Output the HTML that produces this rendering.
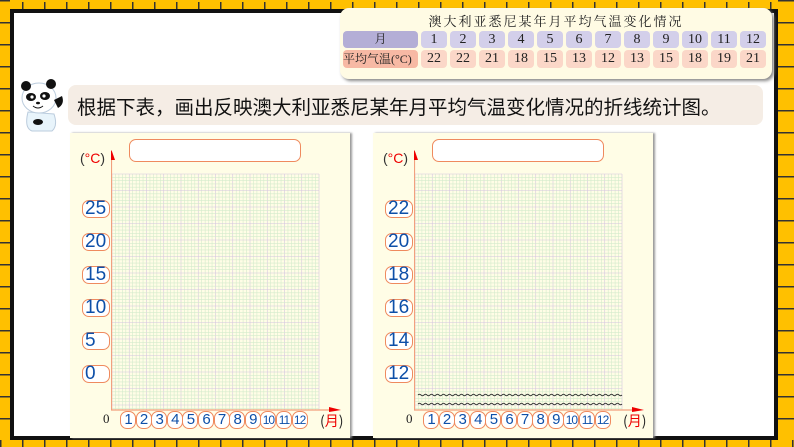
<!DOCTYPE html>
<html><head><meta charset="utf-8"><style>
*{margin:0;padding:0;box-sizing:border-box}
body{width:794px;height:447px;overflow:hidden;background:#fff;position:relative;font-family:"Liberation Sans","Noto Sans CJK SC",sans-serif}
.abs{position:absolute}
</style></head><body>
<svg class="abs" style="left:0;top:0" width="794" height="447">
<defs>
<pattern id="tk" width="22" height="9" patternUnits="userSpaceOnUse"><rect width="22" height="9" fill="#ffc000"/><rect x="0" y="2" width="1.5" height="7" fill="#333"/></pattern>
<pattern id="tkv" width="10" height="22" patternUnits="userSpaceOnUse"><rect width="10" height="22" fill="#ffc000"/><rect x="0" y="0" width="10" height="1.5" fill="#333"/></pattern>
<pattern id="tkr" width="16" height="22" patternUnits="userSpaceOnUse"><rect width="16" height="22" fill="#ffc000"/><rect x="0" y="0" width="16" height="1.5" fill="#333"/></pattern>
<pattern id="tkb" width="22" height="7" patternUnits="userSpaceOnUse"><rect width="22" height="7" fill="#ffc000"/><rect x="0" y="0" width="1.5" height="7" fill="#333"/></pattern>
</defs>
<rect x="0" y="0" width="794" height="9" fill="url(#tk)"/>
<rect x="0" y="0" width="10" height="447" fill="url(#tkv)"/>
<rect x="778" y="0" width="16" height="447" fill="url(#tkr)"/>
<rect x="0" y="440" width="794" height="7" fill="url(#tkb)"/>
<rect x="10" y="9" width="768" height="4" fill="#111"/>
<rect x="10" y="9" width="4" height="431" fill="#111"/>
<rect x="774" y="9" width="4" height="431" fill="#111"/>
<rect x="10" y="436" width="768" height="4" fill="#111"/>
</svg>

<div class="abs" style="left:340px;top:8px;width:432px;height:71px;background:#fffbe4;border-radius:9px;box-shadow:2px 2px 3px #888;font-family:'Liberation Serif','Noto Serif CJK SC',serif;font-size:13px;color:#222">
<div class="abs" style="left:0;top:3px;width:432px;text-align:center;letter-spacing:2px;font-size:13px">澳大利亚悉尼某年月平均气温变化情况</div>
</div>
<div id="tbl"></div>

<div class="abs" style="left:68px;top:85px;width:695px;height:40px;background:#f5ede5;border-radius:8px"></div>
<div class="abs" style="left:77px;top:91px;font-size:19.5px;color:#111;font-family:'Noto Sans CJK SC',sans-serif;white-space:nowrap">根据下表，画出反映澳大利亚悉尼某年月平均气温变化情况的折线统计图。</div>

<svg class="abs" style="left:18px;top:78px" width="48" height="55" viewBox="0 0 48 55">
<path d="M10 34 Q6 50 14 53 L34 53 Q40 48 36 36 Z" fill="#e8f4fb" stroke="#bcd" stroke-width="1"/>
<ellipse cx="21" cy="20" rx="17" ry="15" fill="#fff" stroke="#bcd"/>
<circle cx="8" cy="8" r="5" fill="#111"/><circle cx="33" cy="6" r="5" fill="#111"/>
<ellipse cx="13" cy="19" rx="5" ry="4" fill="#111"/><ellipse cx="27" cy="18" rx="5" ry="4" fill="#111"/>
<circle cx="14" cy="19" r="1.6" fill="#fff"/><circle cx="26" cy="18" r="1.6" fill="#fff"/>
<ellipse cx="20" cy="25" rx="2" ry="1.3" fill="#111"/>
<path d="M15 28 Q20 32 25 28" stroke="#111" fill="none"/>
<path d="M36 22 L44 18 Q47 26 40 30 Z" fill="#111"/>
<ellipse cx="20" cy="44" rx="5" ry="3" fill="#111"/>
</svg>

<div id="charts"></div>

<script>
var t=document.getElementById('tbl');var h='';
var ser="font-family:'Liberation Serif','Noto Serif CJK SC',serif;font-size:14px;color:#222;text-align:center;";
h+='<div class="abs" style="left:343px;top:31px;width:75px;height:17px;background:#b4aed6;border-radius:4px;line-height:17px;'+ser+'font-size:12px">月</div>';
h+='<div class="abs" style="left:343px;top:50px;width:75px;height:18px;background:#f7b9a4;border-radius:4px;line-height:18px;'+ser+'font-size:12px;text-align:left;white-space:nowrap">平均气温(°C)</div>';
var v=[22,22,21,18,15,13,12,13,15,18,19,21];
for(var i=0;i<12;i++){var x=421+i*29;
h+='<div class="abs" style="left:'+x+'px;top:31px;width:26px;height:17px;background:#d3cfea;border-radius:4px;line-height:17px;'+ser+'">'+(i+1)+'</div>';
h+='<div class="abs" style="left:'+x+'px;top:50px;width:26px;height:18px;background:#fbd7c8;border-radius:4px;line-height:18px;'+ser+'">'+v[i]+'</div>';}
t.innerHTML=h;

function chart(px,labels,wavy){
 var ax=px+41;var s='';
 s+='<div class="abs" style="left:'+px+'px;top:133px;width:280px;height:305px;background:#fffde6;box-shadow:2px 0 2px #999"></div>';
 s+='<div class="abs" style="left:'+(px+59)+'px;top:139px;width:172px;height:23px;background:#fff;border:1.3px solid #ef8a5e;border-radius:7px"></div>';
 s+='<div class="abs" style="left:'+(px+10)+'px;top:150px;font-size:14px;color:#333;font-family:\'Liberation Sans\',sans-serif">(<span style="color:#e00">°C</span>)</div>';
 var g='<svg class="abs" style="left:'+ax+'px;top:150px" width="230" height="275">';
 var gx0=1,gw=207,gy0=24,gh=236;
 for(var k=0;k*3.45<=gw+0.5;k++){var xx=gx0+k*3.45;g+='<line x1="'+xx+'" y1="'+gy0+'" x2="'+xx+'" y2="'+(gy0+gh)+'" stroke="'+(k%5==0?'#d4c6e0':'#d4ebcc')+'" stroke-width="0.6"/>';}
 for(var k=0;k*3.3<=gh+0.5;k++){var yy=gy0+k*3.3;g+='<line x1="'+gx0+'" y1="'+yy+'" x2="'+(gx0+gw)+'" y2="'+yy+'" stroke="'+(k%5==0?'#d4c6e0':'#d4ebcc')+'" stroke-width="0.6"/>';}
 if(wavy){for(var w=0;w<2;w++){var y=245+w*9;var d='M4 '+y;for(var q=4;q<208;q+=6)d+=' q1.5 -1.5 3 0 t3 0';g+='<path d="'+d+'" stroke="#333" fill="none" stroke-width="0.9"/>';}}
 g+='<line x1="0.5" y1="8" x2="0.5" y2="260" stroke="#f2a07e" stroke-width="1.2"/>';
 g+='<line x1="0" y1="260" x2="218" y2="260" stroke="#f2a07e" stroke-width="1.2"/>';
 g+='<polygon points="0.5,0 -3,10 4,10" fill="#e00"/>';
 g+='<polygon points="218,257 230,260 218,262" fill="#e00"/>';
 g+='</svg>';s+=g;
 for(var i=0;i<6;i++){var y=200+i*33;
  s+='<div class="abs" style="left:'+(px+12)+'px;top:'+y+'px;width:28px;height:18px;border:1.2px solid #ef8a5e;border-radius:7px;background:#fff;color:#0d4fa8;font-size:19px;line-height:16px;padding-left:2px">'+labels[i]+'</div>';}
 s+='<div class="abs" style="left:'+(px+33)+'px;top:411px;font-size:13px;font-family:\'Liberation Serif\',serif;color:#222">0</div>';
 for(var i=0;i<12;i++){var x=px+50+i*15.6;
  s+='<div class="abs" style="left:'+x+'px;top:411px;width:16px;height:18px;border:1.2px solid #ef8a5e;border-radius:7px;background:#fff;color:#0d4fa8;font-size:'+(i>8?12:15)+'px;line-height:16px;text-align:center;letter-spacing:-1px">'+(i+1)+'</div>';}
 s+='<div class="abs" style="left:'+(px+250)+'px;top:411px;font-size:14px;color:#222;font-family:\'Noto Sans CJK SC\',sans-serif">(<span style="color:#e00">月</span>)</div>';
 return s;}
document.getElementById('charts').innerHTML=chart(70,['25','20','15','10','5','0'],false)+chart(373,['22','20','18','16','14','12'],true);
</script>
</body></html>
